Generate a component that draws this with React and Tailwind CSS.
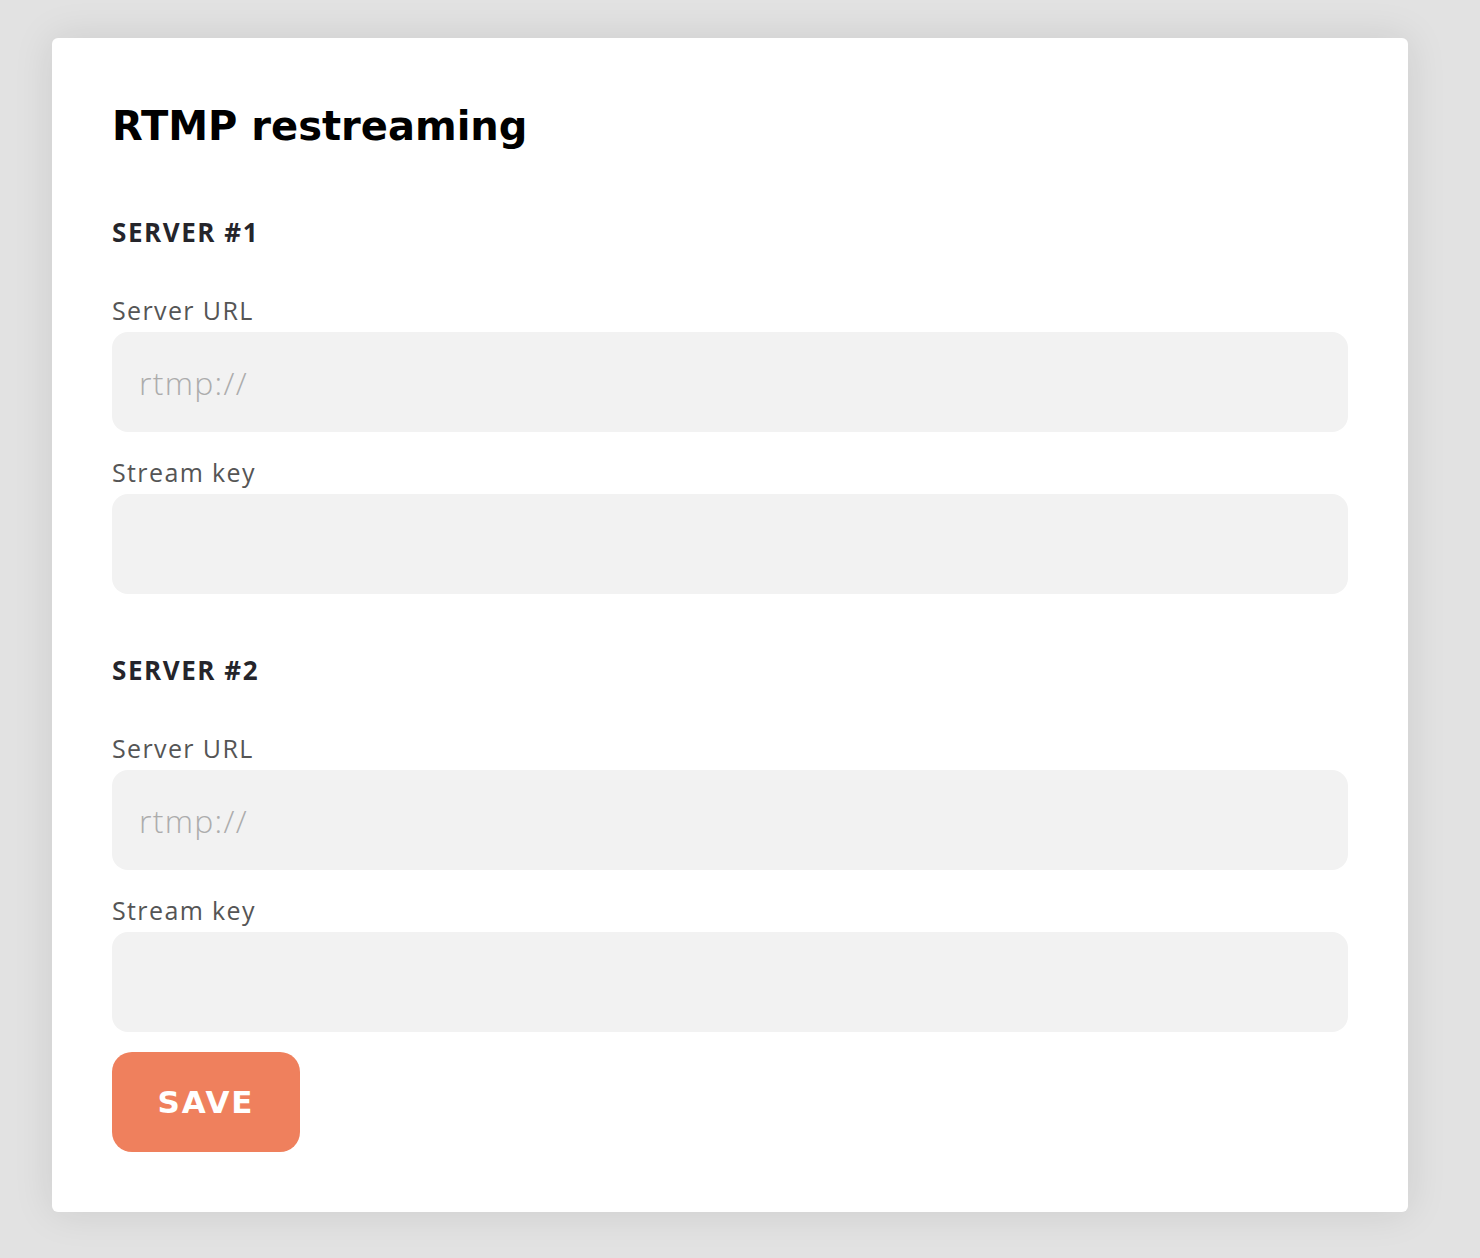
import React, { useState } from 'react';

const Field = ({ label, placeholder, value, onChange, first }) => (
  <div>
    <label
      className={`block font-['Open_Sans',sans-serif] text-[25px] leading-[32px] tracking-[0.055em] text-[#555] ${first ? 'mt-[46px]' : 'mt-[24px]'}`}
    >
      {label}
    </label>
    <input
      type="text"
      value={value}
      onChange={onChange}
      placeholder={placeholder}
      className="mt-[6px] block h-[100px] w-full rounded-[16px] bg-[#f2f2f2] px-[27px] font-['Open_Sans',sans-serif] text-[32px] font-light tracking-[0.04em] text-[#444] outline-none placeholder:text-[#acacac]"
    />
  </div>
);

const App = () => {
  const [servers, setServers] = useState([
    { url: '', key: '' },
    { url: '', key: '' },
  ]);

  const update = (i, field, v) => {
    setServers((s) => s.map((srv, idx) => (idx === i ? { ...srv, [field]: v } : srv)));
  };

  return (
    <div className="min-h-[1258px] w-full bg-[#e2e2e2] pt-[38px]">
      <div className="ml-[52px] w-[1356px] rounded-[6px] bg-white px-[60px] pt-[60px] pb-[60px] shadow-[0_0_40px_rgba(0,0,0,0.10)]">
        <h1 className="font-['DejaVu_Sans',sans-serif] text-[40px] leading-[56px] font-bold text-black">
          RTMP restreaming
        </h1>

        {servers.map((srv, i) => (
          <div key={i} className={i === 0 ? 'mt-[62px]' : 'mt-[60px]'}>
            <h2 className="font-['Open_Sans',sans-serif] text-[26px] leading-[32px] font-bold tracking-[0.06em] text-[#25252b]">
              SERVER #{i + 1}
            </h2>
            <Field
              first
              label="Server URL"
              placeholder="rtmp://"
              value={srv.url}
              onChange={(e) => update(i, 'url', e.target.value)}
            />
            <Field
              label="Stream key"
              placeholder=""
              value={srv.key}
              onChange={(e) => update(i, 'key', e.target.value)}
            />
          </div>
        ))}

        <button className="mt-[20px] block h-[100px] w-[188px] rounded-[20px] bg-[#ef805d] font-['DejaVu_Sans',sans-serif] text-[31px] font-extrabold tracking-[0.06em] text-white">
          SAVE
        </button>
      </div>
    </div>
  );
};

export default App;
